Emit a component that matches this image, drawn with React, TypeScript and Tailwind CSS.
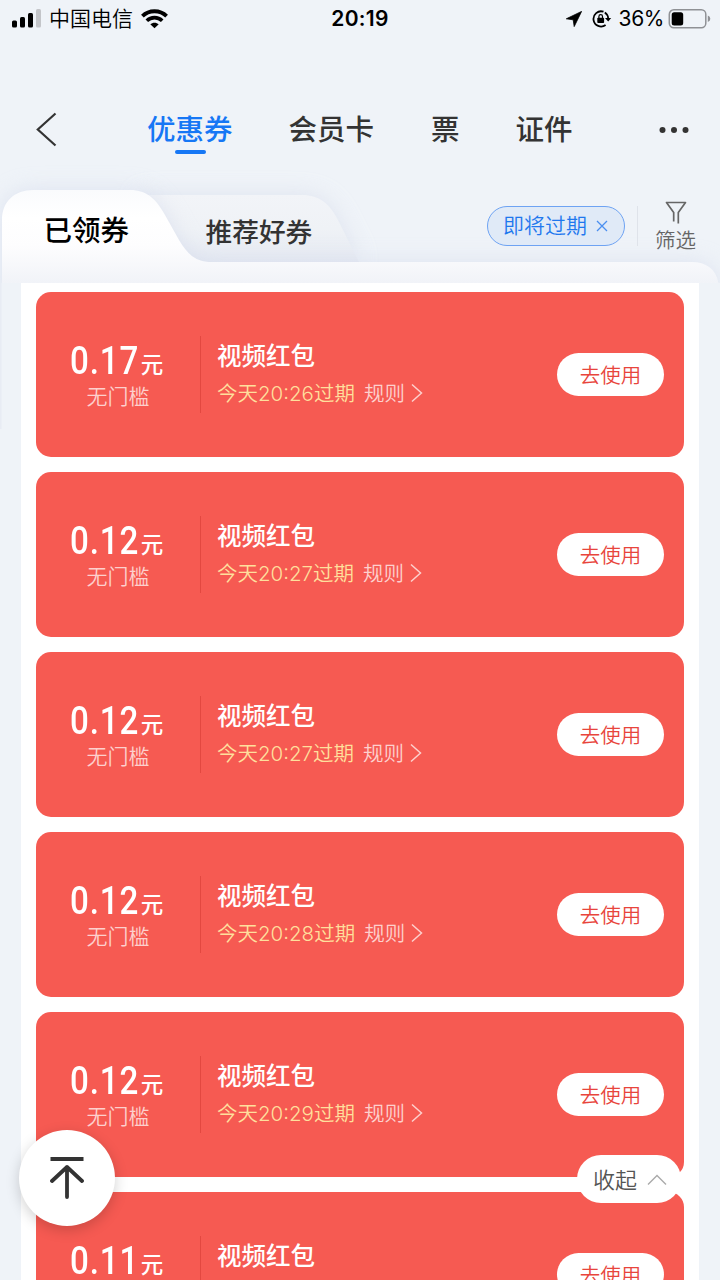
import React from "react";

type Coupon = {
    amount: string;
    expire: string;
};

const coupons: Coupon[] = [
    { amount: "0.17", expire: "20:26" },
    { amount: "0.12", expire: "20:27" },
    { amount: "0.12", expire: "20:27" },
    { amount: "0.12", expire: "20:28" },
    { amount: "0.12", expire: "20:29" },
    { amount: "0.11", expire: "20:29" },
];

function StatusBar(): JSX.Element {
    return (
        <div className="relative flex h-[38px] shrink-0 items-center justify-between pl-3 pr-[9px] text-black">
            <div className="flex items-center">
                <svg width="30" height="20" viewBox="0 0 30 20">
                    <rect x="0" y="11.5" width="5" height="7" rx="1.5" />
                    <rect x="8" y="8" width="5" height="10.500" rx="1.5" />
                    <rect x="16" y="4" width="5" height="14.500" rx="1.5" />
                    <rect x="24" y="0" width="5" height="18.5" rx="1.5" fill="#c3c5c9" />
                </svg>
                <span className="ml-[7px] text-[21px] font-[350] leading-[36px]">中国电信</span>
                <svg className="ml-2" width="27" height="20" viewBox="0 0 27 20" fill="none" stroke="#000">
                    <path d="M1.400 7.200C8 .6 19 .6 25.600 7.200" strokeWidth="3.800" />
                    <path d="M5.800 11.800C10 7.600 17 7.600 21.200 11.800" strokeWidth="3.600" />
                    <path d="M13.500 19.200L9.300 15.200C11.600 13.100 15.400 13.100 17.700 15.200Z" fill="#000" stroke="none" />
                </svg>
            </div>
            <span className="absolute left-0 right-0 text-center text-[21px] font-semibold leading-[36px] tracking-[0.3px]">20:19</span>
            <div className="flex items-center">
                <svg width="16" height="16" viewBox="0 0 16 16">
                    <path d="M15.600 .4L8.200 15.600L7.200 8.800L.3 7.800Z" stroke="#000" strokeWidth=".8" strokeLinejoin="round" />
                </svg>
                <svg className="ml-[10px]" width="20" height="18" viewBox="0 0 20 18" fill="none" stroke="#000" strokeWidth="1.800">
                    <path d="M11.500 1.700A7.600 7.600 0 1 0 13.600 15" />
                    <path d="M12.800 2.400A7.600 7.600 0 0 1 16.200 8.500" />
                    <path d="M13 8H19.200L16.200 11.600Z" fill="#000" stroke="none" />
                    <rect x="5.300" y="7.800" width="6.800" height="5.200" rx=".8" fill="#000" stroke="none" />
                    <path d="M6.900 8V6.400A1.800 1.800 0 0 1 10.500 6.400V8" strokeWidth="1.200" />
                </svg>
                <span className="ml-[7px] text-[21px] leading-[36px] tracking-[-0.4px]">36%</span>
                <svg className="ml-[4px]" width="43" height="20" viewBox="0 0 43 20">
                    <rect x="1.300" y=".8" width="36.500" height="18" rx="4.500" fill="none" stroke="#8f9195" strokeWidth="1.500" />
                    <rect x="3.700" y="3.200" width="11.500" height="13.200" rx="2.500" />
                    <path d="M39.800 6.500Q42.300 7.500 42.300 9.800T39.800 13.100Z" fill="#8f9195" />
                </svg>
            </div>
        </div>
    );
}

function NavBar(): JSX.Element {
    return (
        <div className="flex h-[60px] items-start pl-9 pr-[31px] pt-[12px] text-[28.500px] font-medium leading-[36px] text-[#333]">
            <svg className="shrink-0" width="22" height="36" viewBox="0 0 22 36" fill="none" stroke="#333" strokeWidth="2.200">
                <path d="M19.500 1.500L1.800 17.500L19.500 33.500" />
            </svg>
            <div className="ml-[89px] flex flex-col items-center text-[#1677f5]">
                <span>优惠券</span>
                <span className="ml-px mt-[2px] h-1 w-[31px] rounded-full bg-[#1677f5]" />
            </div>
            <span className="ml-[56px]">会员卡</span>
            <span className="ml-[57px]">票</span>
            <span className="ml-[56px]">证件</span>
            <svg className="ml-auto mt-[14px]" width="30" height="8" viewBox="0 0 30 8" fill="#333">
                <circle cx="3.500" cy="4" r="3" />
                <circle cx="15" cy="4" r="3" />
                <circle cx="26.500" cy="4" r="3" />
            </svg>
        </div>
    );
}

function TabShape(): JSX.Element {
    return (
        <svg className="absolute left-0 top-0" width="720" height="280" viewBox="0 160 720 280">
            <defs>
                <linearGradient id="front" x1="0" y1="190" x2="0" y2="283" gradientUnits="userSpaceOnUse">
                    <stop offset="0" stopColor="#fafbfd" />
                    <stop offset=".3" stopColor="#ffffff" />
                    <stop offset=".6" stopColor="#fdfdfe" />
                    <stop offset="1" stopColor="#f1f3f8" />
                </linearGradient>
                <linearGradient id="back" x1="0" y1="195" x2="0" y2="262" gradientUnits="userSpaceOnUse">
                    <stop offset="0" stopColor="#f2f4f8" />
                    <stop offset=".5" stopColor="#eff2f6" />
                    <stop offset="1" stopColor="#e6eaf2" />
                </linearGradient>
                <filter id="glow" x="-20%" y="-60%" width="140%" height="220%">
                    <feGaussianBlur stdDeviation="11" />
                </filter>
                <clipPath id="strip">
                    <rect x="0" y="160" width="720" height="123" />
                </clipPath>
            </defs>
            <g clipPath="url(#strip)">
                <path d="M140 195H302C320 195 330 204 339 222L359 262H140Z" fill="#d5dbea" opacity=".65" filter="url(#glow)" />
                <path d="M140 195H302C320 195 330 204 339 222L359 262H140Z" fill="url(#back)" />
                <path d="M2 300V220C2 201 15 190 33 190H130C147 190 156 199 165 215L179 240C188 255 196 262 212 262H692C708 262 719 271 719 290V300Z" fill="#d0d8ea" opacity=".6" filter="url(#glow)" />
                <path d="M2 300V220C2 201 15 190 33 190H130C147 190 156 199 165 215L179 240C188 255 196 262 212 262H692C708 262 719 271 719 290V300Z" fill="url(#front)" />
            </g>
            <rect x="0" y="283" width="1.500" height="146" fill="#e8ecf4" />
        </svg>
    );
}

function TabStrip(): JSX.Element {
    return (
        <div className="relative h-[123px]">
            <TabShape />
            <div className="relative flex items-start">
                <span className="ml-[43.500px] mt-[53px] text-[28.500px] font-medium leading-[36px] text-black">已领券</span>
                <span className="ml-[76.500px] mt-[54px] text-[26.700px] font-medium leading-[36px] text-[#333]">推荐好券</span>
                <div className="ml-auto mt-[46px] flex h-10 w-[138px] items-center rounded-full border border-[#6ea3f3] bg-[#e0eaf7] pl-[15px] text-[21px] font-[350] leading-[38px] text-[#1f78ee]">
                    即将过期
                    <svg className="ml-[9px]" width="12" height="12" viewBox="0 0 12 12" stroke="#4b8ff0" strokeWidth="1.300">
                        <path d="M1 1L11 11M11 1L1 11" />
                    </svg>
                </div>
                <div className="ml-3 mt-[46px] h-10 w-px bg-[#dfe3ea]" />
                <div className="ml-[17px] mr-6 mt-[41px] flex flex-col items-center text-[20.500px] font-[350] leading-[28px] text-[#666]">
                    <svg width="22" height="23" viewBox="0 0 22 23" fill="none" stroke="#666" strokeWidth="1.700" strokeLinejoin="round">
                        <path d="M8.700 20.500V11.500L1.500 1.500H20.500L13.300 11.500V22.500" />
                    </svg>
                    <span className="mt-[3px]">筛选</span>
                </div>
            </div>
        </div>
    );
}

function CouponCard({ amount, expire }: Coupon): JSX.Element {
    return (
        <div className="flex h-[165px] shrink-0 items-center rounded-[15px] bg-[#f65a52] pr-5 text-white">
            <div className="flex w-[164px] flex-col items-center pt-[4px]">
                <div className="flex h-10 items-baseline pr-[3px] leading-[40px]">
                    <span className="w-[71px] origin-left scale-x-[0.85] whitespace-nowrap font-[Roboto] text-[39px] font-medium tracking-[1px]">{amount}</span>
                    <span className="relative -top-px text-[22.500px] font-medium leading-[30px]">元</span>
                </div>
                <span className="mt-px text-[21px] font-[350] leading-[30px] text-[#fdd0cd]">无门槛</span>
            </div>
            <div className="h-[77px] w-px bg-[#e34840]" />
            <div className="ml-4 flex flex-col">
                <span className="text-[24.500px] font-medium leading-[36px]">视频红包</span>
                <div className="mt-[2px] flex h-[35px] items-center text-[20.500px] font-[350] leading-[36px]">
                    <span className="text-[#ffdf9c]">今天{expire}过期</span>
                    <span className="ml-[9px] text-[#fdd0cd]">规则</span>
                    <svg className="mb-[2px] ml-[6px]" width="12" height="20" viewBox="0 0 12 20" fill="none" stroke="#fdd0cd" strokeWidth="1.500">
                        <path d="M1 1.500L10.500 10L1 18.500" />
                    </svg>
                </div>
            </div>
            <button className="ml-auto h-[43px] w-[107px] rounded-full bg-white pt-[2px] text-[20.500px] font-[350] leading-[41px] text-[#e8453c]">去使用</button>
        </div>
    );
}

export default function App(): JSX.Element {
    return (
        <div className="relative flex h-[1280px] w-[720px] flex-col overflow-hidden bg-[#eff3f8] font-[Inter,'Noto_Sans_CJK_SC',sans-serif]">
            <StatusBar />
            <div className="mt-[62px]">
                <NavBar />
                <TabStrip />
            </div>
            <div className="relative mx-[21px] flex h-[997px] flex-col gap-[15px] overflow-hidden bg-white px-[15px] pt-[9px]">
                {coupons.map((coupon, index) => (
                    <CouponCard key={index} amount={coupon.amount} expire={coupon.expire} />
                ))}
            </div>
            <button className="absolute left-[19px] top-[1130px] flex h-24 w-24 items-center justify-center rounded-full bg-white shadow-[0_4px_14px_rgba(0,0,0,0.18)]">
                <svg width="34" height="44" viewBox="0 0 34 44" fill="none" stroke="#333" strokeWidth="3.800">
                    <path d="M.5 3H33.500" />
                    <path d="M17 41V11M2 25L17 11L32 25" strokeLinecap="round" strokeLinejoin="round" />
                </svg>
            </button>
            <button className="absolute left-[577px] top-[1155px] flex h-12 w-[104px] items-center rounded-full bg-white pl-4 pt-px text-[22px] font-[350] leading-[48px] text-[#555]">
                收起
                <svg className="ml-[10px]" width="20" height="12" viewBox="0 0 20 12" fill="none" stroke="#aaa" strokeWidth="1.400">
                    <path d="M1 10.500L10 1.500L19 10.500" />
                </svg>
            </button>
        </div>
    );
}
